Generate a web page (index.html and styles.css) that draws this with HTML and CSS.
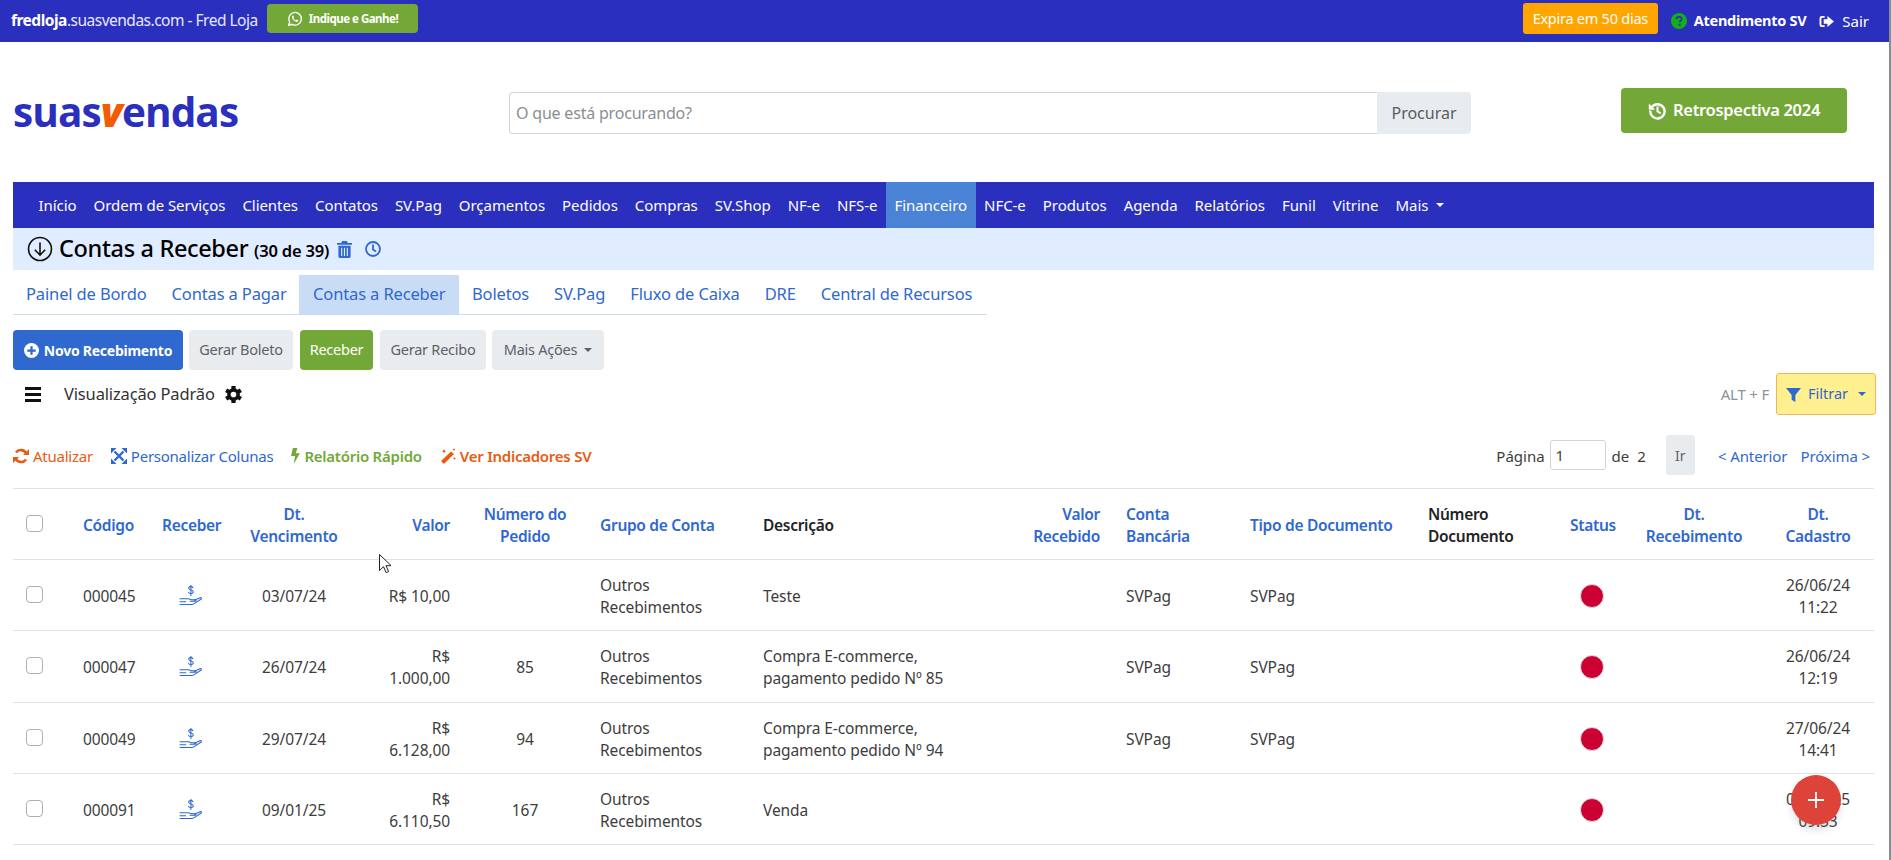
FILE: index.html
```html
<!DOCTYPE html>
<html lang="pt-BR">
<head>
<meta charset="utf-8">
<title>Contas a Receber</title>
<link rel="stylesheet" href="styles.css">
</head>
<body>
<svg class="sprite" width="0" height="0" aria-hidden="true">
  <symbol id="i-hand" viewBox="0 0 24 22">
    <g fill="none" stroke="currentColor" stroke-width="1.100" stroke-linecap="round" stroke-linejoin="round">
      <path d="M14.600 2.800c-.5-.8-1.200-1.100-2.200-1.100-1.400 0-2.300.7-2.300 1.800 0 2.500 4.800 1.200 4.800 3.700 0 1.100-1 1.800-2.400 1.800-1.100 0-2-.4-2.500-1.200"/>
      <path d="M12.400 0v11"/>
      <path d="M1 14.500h8.500c2 0 3 1 4 1h3.500c1 0 1.300 1.500-.2 1.500h-5.300"/>
      <path d="M16 16l6-2.700c1.300-.5 2 .8.800 1.600l-6.800 4.600c-1 .6-1.800.9-3 .9H1"/>
      <path d="M1 17.500h6"/>
    </g>
  </symbol>
  <symbol id="i-gear" viewBox="0 0 24 24">
    <circle cx="12" cy="12" r="6.500" fill="none" stroke="currentColor" stroke-width="5"/>
    <g fill="currentColor">
      <rect x="9" y="0" width="6" height="5"/>
      <rect x="9" y="19" width="6" height="5"/>
      <rect x="9" y="0" width="6" height="5" transform="rotate(60 12 12)"/>
      <rect x="9" y="19" width="6" height="5" transform="rotate(60 12 12)"/>
      <rect x="9" y="0" width="6" height="5" transform="rotate(120 12 12)"/>
      <rect x="9" y="19" width="6" height="5" transform="rotate(120 12 12)"/>
    </g>
  </symbol>
</svg>

<header class="topbar">
  <div class="topbar-left">
    <span class="site"><b>fredloja</b>.suasvendas.com - Fred Loja</span>
    <a class="btn-indique">
      <svg class="ic-wa" viewBox="0 0 24 24"><path d="M2.500 21.500l1.400-5A9.500 9.500 0 1 1 7.500 20z" fill="none" stroke="currentColor" stroke-width="2"/><path d="M8.500 6.800c-1 .8-1.500 2-.8 3.800 1 2.400 3 4.500 5.600 5.500 1.600.6 3 0 3.700-1 .3-.5.300-1 .1-1.200l-2.100-1c-.3-.1-.5 0-.7.200l-.7.900c-.2.200-.4.200-.7.100-1.300-.5-2.500-1.600-3.200-2.800-.1-.3-.1-.5.100-.7l.6-.7c.1-.2.200-.4.100-.6l-.9-2.100c-.2-.4-.7-.5-1.100-.2z" fill="currentColor"/></svg>
      Indique e Ganhe!
    </a>
  </div>
  <div class="topbar-right">
    <span class="expira">Expira em 50 dias</span>
    <svg class="ic-help" viewBox="0 0 16 16"><circle cx="8" cy="8" r="8" fill="#13b013"/><path d="M5.500 6.200c0-1.500 1.100-2.400 2.600-2.400s2.500.9 2.500 2.200c0 1.900-2 1.800-2 3.300" fill="none" stroke="#2a2fbd" stroke-width="1.800"/><rect x="7.500" y="10.700" width="2" height="2" fill="#2a2fbd"/></svg>
    <b class="atendimento">Atendimento SV</b>
    <svg class="ic-out" viewBox="0 0 16 14"><path d="M6 2H3a1.500 1.500 0 0 0-1.500 1.500v7A1.500 1.500 0 0 0 3 12h3" fill="none" stroke="currentColor" stroke-width="2"/><path d="M9 1l7 6-7 6V9.500H5v-5h4z" fill="currentColor"/></svg>
    <span class="sair">Sair</span>
  </div>
</header>

<section class="brand">
  <div class="logo-box"><span class="logo">suas<i>v</i>endas</span></div>
  <form class="search">
    <input class="search-input" type="text" placeholder="O que está procurando?">
    <span class="search-btn">Procurar</span>
  </form>
  <a class="btn-retro">
    <svg class="ic-hist" viewBox="0 0 24 24"><path d="M4.500 8A9 9 0 1 1 3 12" fill="none" stroke="currentColor" stroke-width="3"/><path d="M1 3v8h8z" fill="currentColor"/><path d="M12 7v6l4 2.500" fill="none" stroke="currentColor" stroke-width="2.600"/></svg>
    Retrospectiva 2024
  </a>
</section>

<main class="main">
  <nav class="nav">
    <a>Início</a><a>Ordem de Serviços</a><a>Clientes</a><a>Contatos</a><a>SV.Pag</a><a>Orçamentos</a><a>Pedidos</a><a>Compras</a><a>SV.Shop</a><a>NF-e</a><a>NFS-e</a><a class="active">Financeiro</a><a>NFC-e</a><a>Produtos</a><a>Agenda</a><a>Relatórios</a><a>Funil</a><a>Vitrine</a><a>Mais <span class="caret caret-light"></span></a>
  </nav>

  <div class="titlebar">
    <svg class="ic-down" viewBox="0 0 26 26"><circle cx="13" cy="13" r="11.500" fill="none" stroke="currentColor" stroke-width="1.600"/><path d="M13 6.500v12.500M7.800 13.800L13 19l5.200-5.200" fill="none" stroke="currentColor" stroke-width="1.600"/></svg>
    <h1 class="title">Contas a Receber <small>(30 de 39)</small></h1>
    <svg class="ic-trash" viewBox="0 0 16 18"><path d="M5.500 0h5l1 2H16v2H0V2h4.500zM1.500 5h13v11.500A1.500 1.500 0 0 1 13 18H3a1.500 1.500 0 0 1-1.500-1.500z" fill="currentColor"/><path d="M5 7v9M8 7v9M11 7v9" stroke="#e0ecff" stroke-width="1.200"/></svg>
    <svg class="ic-clock" viewBox="0 0 16 16"><circle cx="8" cy="8" r="7" fill="none" stroke="currentColor" stroke-width="1.800"/><path d="M8 3.500V8.500l3 2" fill="none" stroke="currentColor" stroke-width="1.800"/></svg>
  </div>

  <div class="tabs">
    <a>Painel de Bordo</a><a>Contas a Pagar</a><a class="active">Contas a Receber</a><a>Boletos</a><a>SV.Pag</a><a>Fluxo de Caixa</a><a>DRE</a><a>Central de Recursos</a>
  </div>

  <div class="toolbar">
    <a class="btn btn-primary">
      <svg class="ic-plus" viewBox="0 0 16 16"><circle cx="8" cy="8" r="8" fill="currentColor"/><path d="M8 3.500v9M3.500 8h9" stroke="#2f68cf" stroke-width="2.400"/></svg>
      Novo Recebimento
    </a>
    <a class="btn btn-gray b-boleto">Gerar Boleto</a>
    <a class="btn btn-green">Receber</a>
    <a class="btn btn-gray b-recibo">Gerar Recibo</a>
    <a class="btn btn-gray b-acoes">Mais Ações <span class="caret"></span></a>
  </div>

  <div class="viewrow">
    <div class="view-left">
      <span class="burger"><i></i><i></i><i></i></span>
      <span class="view-name">Visualização Padrão</span>
      <svg class="ic-gear"><use href="#i-gear"/></svg>
    </div>
    <div class="view-right">
      <span class="altf">ALT + F</span>
      <a class="btn-filter">
        <svg class="ic-funnel" viewBox="0 0 16 16"><path d="M0 1h16L10 8.500V16l-4-2.500v-5z" fill="currentColor"/></svg>
        Filtrar <span class="caret caret-blue"></span>
      </a>
    </div>
  </div>

  <div class="actions">
    <div class="links">
      <a class="lnk lnk-orange">
        <svg class="ic-act" viewBox="0 0 16 16"><path d="M13.500 6A6 6 0 0 0 3 4.500M2.500 10A6 6 0 0 0 13 11.500" fill="none" stroke="currentColor" stroke-width="2.600"/><path d="M16 1v6h-6zM0 15V9h6z" fill="currentColor"/></svg>
        Atualizar
      </a>
      <a class="lnk lnk-blue">
        <svg class="ic-act" viewBox="0 0 16 16"><path d="M3.500 3.500l9 9M12.500 3.500l-9 9" stroke="currentColor" stroke-width="2.400"/><path d="M0 0h5.500L0 5.500zM16 0v5.500L10.500 0zM0 16v-5.500L5.500 16zM16 16h-5.500l5.500-5.500z" fill="currentColor"/></svg>
        Personalizar Colunas
      </a>
      <a class="lnk lnk-green">
        <svg class="ic-bolt" viewBox="0 0 10 18"><path d="M2 0h5L5.500 6H10L3 18l1.500-9H0z" fill="currentColor"/></svg>
        Relatório Rápido
      </a>
      <a class="lnk lnk-orange lnk-bold">
        <svg class="ic-act" viewBox="0 0 16 16"><path d="M11 3.500L14 6 4 16l-3-3z" fill="currentColor"/><path d="M4 1l.7 1.500L6 3.200l-1.300.7L4 5.500l-.7-1.600L2 3.200l1.300-.7zM14 0l.5 1 1 .5-1 .5-.5 1-.5-1-1-.5 1-.5zM14.500 9l.5 1 1 .5-1 .5-.5 1-.5-1-1-.5 1-.5z" fill="currentColor"/></svg>
        Ver Indicadores SV
      </a>
    </div>
    <div class="pager">
      <span class="p-label">Página</span>
      <input class="p-input" type="text" value="1">
      <span class="p-de">de</span>
      <span class="p-total">2</span>
      <a class="p-go">Ir</a>
      <a class="p-link">&lt; Anterior</a>
      <a class="p-link p-next">Próxima &gt;</a>
    </div>
  </div>

  <table class="grid">
    <colgroup>
      <col class="c1"><col class="c2"><col class="c3"><col class="c4"><col class="c5"><col class="c6"><col class="c7"><col class="c8"><col class="c9"><col class="c10"><col class="c11"><col class="c12"><col class="c13"><col class="c14"><col class="c15">
    </colgroup>
    <thead>
      <tr>
        <th><span class="check"></span></th>
        <th>Código</th>
        <th class="ctr">Receber</th>
        <th class="ctr">Dt.<br>Vencimento</th>
        <th class="rgt">Valor</th>
        <th class="ctr">Número do Pedido</th>
        <th>Grupo de Conta</th>
        <th class="plain">Descrição</th>
        <th class="rgt vr">Valor<br>Recebido</th>
        <th>Conta<br>Bancária</th>
        <th>Tipo de Documento</th>
        <th class="plain">Número<br>Documento</th>
        <th class="ctr">Status</th>
        <th class="ctr">Dt.<br>Recebimento</th>
        <th class="ctr">Dt.<br>Cadastro</th>
      </tr>
    </thead>
    <tbody>
      <tr>
        <td><span class="check"></span></td>
        <td>000045</td>
        <td class="ctr"><svg class="ic-hand"><use href="#i-hand"/></svg></td>
        <td class="ctr">03/07/24</td>
        <td class="rgt">R$ 10,00</td>
        <td class="ctr"></td>
        <td>Outros<br>Recebimentos</td>
        <td>Teste</td>
        <td></td>
        <td>SVPag</td>
        <td>SVPag</td>
        <td></td>
        <td class="ctr"><span class="dot"></span></td>
        <td></td>
        <td class="ctr">26/06/24<br>11:22</td>
      </tr>
      <tr class="tall">
        <td><span class="check"></span></td>
        <td>000047</td>
        <td class="ctr"><svg class="ic-hand"><use href="#i-hand"/></svg></td>
        <td class="ctr">26/07/24</td>
        <td class="rgt">R$<br>1.000,00</td>
        <td class="ctr">85</td>
        <td>Outros<br>Recebimentos</td>
        <td>Compra E-commerce,<br>pagamento pedido Nº 85</td>
        <td></td>
        <td>SVPag</td>
        <td>SVPag</td>
        <td></td>
        <td class="ctr"><span class="dot"></span></td>
        <td></td>
        <td class="ctr">26/06/24<br>12:19</td>
      </tr>
      <tr>
        <td><span class="check"></span></td>
        <td>000049</td>
        <td class="ctr"><svg class="ic-hand"><use href="#i-hand"/></svg></td>
        <td class="ctr">29/07/24</td>
        <td class="rgt">R$<br>6.128,00</td>
        <td class="ctr">94</td>
        <td>Outros<br>Recebimentos</td>
        <td>Compra E-commerce,<br>pagamento pedido Nº 94</td>
        <td></td>
        <td>SVPag</td>
        <td>SVPag</td>
        <td></td>
        <td class="ctr"><span class="dot"></span></td>
        <td></td>
        <td class="ctr">27/06/24<br>14:41</td>
      </tr>
      <tr>
        <td><span class="check"></span></td>
        <td>000091</td>
        <td class="ctr"><svg class="ic-hand"><use href="#i-hand"/></svg></td>
        <td class="ctr">09/01/25</td>
        <td class="rgt">R$<br>6.110,50</td>
        <td class="ctr">167</td>
        <td>Outros<br>Recebimentos</td>
        <td>Venda</td>
        <td></td>
        <td></td>
        <td></td>
        <td></td>
        <td class="ctr"><span class="dot"></span></td>
        <td></td>
        <td class="ctr">09/01/25<br>09:53</td>
      </tr>
    </tbody>
  </table>
</main>

<a class="fab"><svg viewBox="0 0 20 20"><path d="M10 2v16M2 10h16" stroke="#fff" stroke-width="1.800"/></svg></a>
<svg class="cursor" viewBox="0 0 12 19"><path d="M.5.500v16l4-3.800 2.700 6 2.500-1.100-2.700-5.900h5.200z" fill="#fff" stroke="#222" stroke-width="1"/></svg>
</body>
</html>
```

FILE: styles.css
```css
* { box-sizing: border-box; }
html, body { height: 100%; }
body {
  margin: 0;
  height: 860px;
  overflow: hidden;
  background: #fff;
  border-right: 2px solid #8c8c8c;
  color: #3d3d3d;
  font-family: "Noto Sans", "Open Sans", sans-serif;
  font-size: 15px;
  line-height: 1.5;
  position: relative;
}
a { text-decoration: none; color: inherit; }
.sprite { position: absolute; }

/* top bar */
.topbar {
  height: 42px;
  background: #2a2fbd;
  color: #fff;
  display: flex;
  justify-content: space-between;
  align-items: center;
  padding: 0 20px 0 11px;
}
.topbar-left, .topbar-right { display: flex; align-items: center; }
.site { font-size: 15.500px; letter-spacing: -.5px; color: #e8e9fb; width: 256px; white-space: nowrap; }
.site b { color: #fff; font-weight: 700; }
.btn-indique {
  width: 151px;
  height: 29px;
  margin-top: -5px;
  background: #73a839;
  border-radius: 4px;
  color: #fff;
  display: flex;
  align-items: center;
  justify-content: center;
  gap: 6px;
  font-size: 11.500px;
  font-weight: 700;
  letter-spacing: -.5px;
}
.ic-wa { width: 16px; height: 16px; }
.expira {
  width: 135px;
  height: 31px;
  margin-top: -5px;
  background: #ffa500;
  border-radius: 3px;
  display: flex;
  align-items: center;
  justify-content: center;
  font-size: 14.500px;
  letter-spacing: -.25px;
}
.ic-help { width: 16px; height: 16px; margin-left: 13px; }
.atendimento { margin-left: 7px; font-size: 14.500px; letter-spacing: -.3px; }
.ic-out { width: 15px; height: 13px; margin-left: 13px; }
.sair { margin-left: 8px; font-size: 15px; }

/* brand row */
.brand {
  height: 140px;
  display: flex;
  align-items: center;
  padding-left: 13px;
}
.logo-box { width: 496px; }
.logo {
  display: block;
  font-family: "Open Sans", sans-serif;
  font-size: 40.500px;
  font-weight: 700;
  line-height: 40px;
  color: #2a2fbd;
  letter-spacing: -.9px;
}
.logo i { color: #f25c05; font-weight: 800; }
.search { width: 962px; height: 42px; margin-top: 2px; display: flex; }
.search-input {
  flex: 1;
  min-width: 0;
  border: 1px solid #ced4da;
  border-right: 0;
  border-radius: 4px 0 0 4px;
  padding: 0 6px;
  font: inherit;
  font-size: 16px;
  letter-spacing: -.2px;
  outline: 0;
}
.search-input::placeholder { color: #888e94; opacity: 1; }
.search-btn {
  width: 94px;
  background: #e9ecef;
  border-radius: 0 4px 4px 0;
  display: flex;
  align-items: center;
  justify-content: center;
  font-size: 16px;
  color: #555c63;
}
.btn-retro {
  margin: 0 0 3px 150px;
  width: 226px;
  height: 45px;
  background: #73a839;
  border-radius: 4px;
  color: #fff;
  display: flex;
  align-items: center;
  justify-content: center;
  gap: 6px;
  font-size: 16.500px;
  font-weight: 600;
  letter-spacing: -.3px;
}
.ic-hist { width: 19px; height: 19px; }

/* main column */
.main { width: 1861px; margin-left: 13px; }

.nav {
  height: 46px;
  background: #2a2fbd;
  color: #fff;
  display: flex;
  align-items: stretch;
  padding-left: 17px;
  font-size: 15px;
  letter-spacing: -.05px;
}
.nav a { display: flex; align-items: center; padding: 0 8.500px; gap: 5px; }
.nav a.active { background: #4a82d6; }
.caret {
  display: inline-block;
  border-top: 4px solid #5c6268;
  border-left: 4px solid transparent;
  border-right: 4px solid transparent;
  margin-left: 3px;
  vertical-align: 2px;
}
.caret-light { border-top-color: #fff; }
.caret-blue { border-top-color: #2f68cf; }

.titlebar {
  height: 42px;
  background: #e0ecff;
  display: flex;
  align-items: center;
  padding-left: 14px;
}
.ic-down { width: 26px; height: 26px; color: #111; }
.title {
  margin: 0 0 0 6px;
  font-size: 23.500px;
  font-weight: 500;
  color: #000;
  letter-spacing: -.35px;
  line-height: 42px;
}
.title small { font-size: 16.500px; font-weight: 600; letter-spacing: -.2px; }
.ic-trash { width: 15px; height: 17px; margin-left: 8px; color: #2f68cf; }
.ic-clock { width: 16px; height: 16px; margin-left: 13px; color: #2f68cf; }

.tabs {
  margin-top: 5px;
  width: 974px;
  height: 40px;
  border-bottom: 1px solid #c9dcf5;
  display: flex;
  color: #2f68cf;
  font-size: 16.500px;
  letter-spacing: -.14px;
}
.tabs a { display: flex; align-items: center; padding: 0 12.500px; white-space: nowrap; }
.tabs a:first-child { padding-left: 13px; }
.tabs a.active { background: #c9dcf5; padding: 0 14px; }

.toolbar {
  margin-top: 15px;
  height: 40px;
  display: flex;
  gap: 6px;
}
.btn {
  display: flex;
  align-items: center;
  justify-content: center;
  border-radius: 4px;
  font-size: 14.500px;
  letter-spacing: -.25px;
  white-space: nowrap;
}
.btn-primary {
  width: 170px;
  background: #2f68cf;
  color: #fff;
  font-size: 14px;
  font-weight: 700;
  gap: 5px;
}
.ic-plus { width: 15px; height: 15px; }
.btn-gray { background: #e9ecef; color: #5c6268; }
.btn-green { background: #73a839; color: #fff; width: 73px; margin-left: 1px; }
.b-boleto { width: 104px; }
.b-recibo { width: 106px; margin-left: 1px; }
.b-acoes { width: 112px; gap: 4px; }

.viewrow {
  margin-top: 3px;
  height: 42px;
  display: flex;
  justify-content: space-between;
  align-items: center;
}
.view-left { display: flex; align-items: center; padding-left: 12px; }
.burger { display: flex; flex-direction: column; gap: 3px; width: 16px; }
.burger i { display: block; height: 3px; background: #111; }
.view-name { margin-left: 23px; font-size: 16.500px; letter-spacing: -.15px; color: #333; }
.ic-gear { width: 17px; height: 17px; margin-left: 10px; color: #111; }
.view-right { display: flex; align-items: center; margin-right: -2px; }
.altf { font-size: 15px; color: #8d9297; letter-spacing: -.2px; margin-right: 7px; }
.btn-filter {
  width: 100px;
  height: 42px;
  background: #fff08f;
  border: 1px solid #f0b45a;
  border-radius: 3px;
  display: flex;
  align-items: center;
  justify-content: center;
  gap: 7px;
  color: #2f68cf;
  font-size: 14.500px;
}
.ic-funnel { width: 15px; height: 15px; }

.actions {
  margin-top: 20px;
  height: 40px;
  display: flex;
  justify-content: space-between;
  align-items: center;
}
.links { display: flex; align-items: center; gap: 18px; padding-top: 2px; }
.lnk {
  display: flex;
  align-items: center;
  gap: 4px;
  font-size: 15px;
  letter-spacing: -.25px;
  white-space: nowrap;
}
.lnk-orange { color: #e65c12; }
.lnk-blue { color: #2f68cf; }
.lnk-green { color: #73a839; font-weight: 600; }
.lnk-bold { font-weight: 600; }
.ic-act { width: 16px; height: 16px; }
.ic-bolt { width: 9px; height: 16px; }

.pager { display: flex; align-items: center; padding-right: 4px; font-size: 15px; }
.p-label, .p-de, .p-total, .p-link { padding-top: 2px; }
.p-input {
  width: 56px;
  height: 30px;
  margin-left: 5px;
  border: 1px solid #ced4da;
  border-radius: 3px;
  padding: 0 5px;
  font: inherit;
  color: #444;
  outline: 0;
}
.p-de { margin-left: 6px; }
.p-total { margin-left: 8px; }
.p-go {
  margin-left: 20px;
  width: 29px;
  height: 40px;
  background: #e9ecef;
  border-radius: 3px;
  display: flex;
  align-items: center;
  justify-content: center;
  font-size: 14px;
  color: #5c6268;
}
.p-link { margin-left: 23px; color: #2f68cf; letter-spacing: -.1px; }
.p-next { margin-left: 13px; }

/* table */
.grid {
  margin-top: 13px;
  width: 1861px;
  table-layout: fixed;
  border-collapse: collapse;
  font-size: 15.500px;
}
.c1 { width: 58px; } .c2 { width: 79px; } .c3 { width: 81px; }
.c4 { width: 126px; } .c5 { width: 105px; } .c6 { width: 126px; }
.c7 { width: 163px; } .c8 { width: 243px; } .c9 { width: 120px; }
.c10 { width: 124px; } .c11 { width: 178px; } .c12 { width: 142px; }
.c13 { width: 68px; } .c14 { width: 136px; } .c15 { width: 112px; }
.grid th, .grid td {
  padding: 1px 12px 0;
  border-top: 1px solid #dee2e6;
  text-align: left;
  vertical-align: middle;
  line-height: 22px;
}
.grid th {
  height: 71px;
  color: #2f68cf;
  font-weight: 600;
  letter-spacing: -.3px;
}
.grid th.plain { color: #222; }
.grid th.vr { padding-right: 14px; }
.grid td { height: 71px; letter-spacing: -.1px; }
.grid tr.tall td { height: 72px; }
.grid tbody tr:last-child td { border-bottom: 1px solid #dee2e6; }
.grid .ctr { text-align: center; }
.grid .rgt { text-align: right; }
.check {
  display: block;
  width: 17px;
  height: 17px;
  background: #fff;
  border: 1px solid #aab0b6;
  border-radius: 4px;
  margin: -3px 0 0 1px;
}
.ic-hand { display: block; width: 23px; height: 21px; margin: -1px auto 0; color: #2f68cf; }
.dot {
  display: block;
  width: 24px;
  height: 24px;
  margin: 0 auto;
  background: #cc0033;
  border: 1px solid #dde0e4;
  border-radius: 50%;
}

/* overlays */
.fab {
  position: absolute;
  left: 1791px;
  top: 775px;
  width: 50px;
  height: 50px;
  border-radius: 50%;
  background: #dd4338;
  box-shadow: 0 6px 6px rgba(60, 80, 100, .15);
  display: flex;
  align-items: center;
  justify-content: center;
}
.fab svg { width: 20px; height: 20px; }
.cursor { position: absolute; left: 379px; top: 554px; width: 12px; height: 19px; }
```
